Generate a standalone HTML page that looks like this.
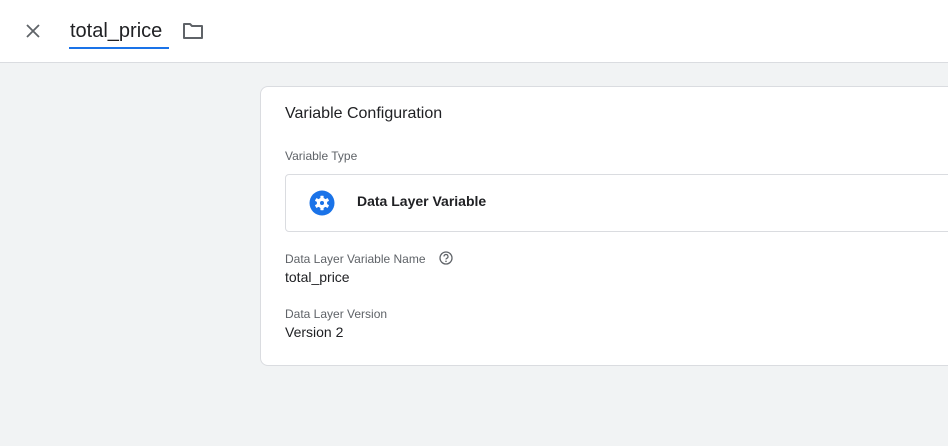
<!DOCTYPE html>
<html><head><style>
body{margin:0;width:948px;height:446px;background:#f1f3f4;font-family:"Liberation Sans",sans-serif;position:relative;overflow:hidden;color:#202124}
.hdr{position:absolute;left:0;top:0;width:948px;height:62px;background:#fff;border-bottom:1px solid #dadce0}
.t{position:absolute;left:70px;top:20px;font-size:20px;color:#202124}
.ul{position:absolute;left:69px;top:47px;width:100px;height:2px;background:#1a73e8}
.card{position:absolute;left:260px;top:86px;width:720px;height:278px;background:#fff;border:1px solid #dadce0;border-radius:8px}
.a{position:absolute;font-size:12px;color:#5f6368}
.v{position:absolute;font-size:14px;color:#202124}
.box{position:absolute;left:24px;top:87px;width:700px;height:56px;border:1px solid #dadce0;border-radius:4px}
</style></head><body>
<div class="hdr">
<svg style="position:absolute;left:25px;top:23px" width="16" height="16" viewBox="0 0 16 16"><path d="M2 2L14 14M14 2L2 14" stroke="#5f6368" stroke-width="1.8"/></svg>
<div class="t">total_price</div><div class="ul"></div>
<svg style="position:absolute;left:182px;top:21px" width="22" height="20" viewBox="0 0 22 20"><path d="M2 3h6l2 2h10v12H2z" fill="none" stroke="#5f6368" stroke-width="2" stroke-linejoin="round"/></svg>
</div>
<div class="card">
<div class="v" style="left:24px;top:18px;font-size:16px">Variable Configuration</div>
<div class="a" style="left:24px;top:62px">Variable Type</div>
<div class="box">
<svg style="position:absolute;left:23px;top:15px" width="26" height="26" viewBox="0 0 26 26"><circle cx="13" cy="13" r="12.5" fill="#1a73e8"/>
<g transform="translate(13 13)" fill="#fff">
<circle r="5.2"/>
<rect x="-1.6" y="-7.3" width="3.2" height="3.2" rx=".5"/>
<rect x="-1.6" y="-7.3" width="3.2" height="3.2" rx=".5" transform="rotate(60)"/>
<rect x="-1.6" y="-7.3" width="3.2" height="3.2" rx=".5" transform="rotate(120)"/>
<rect x="-1.6" y="-7.3" width="3.2" height="3.2" rx=".5" transform="rotate(180)"/>
<rect x="-1.6" y="-7.3" width="3.2" height="3.2" rx=".5" transform="rotate(240)"/>
<rect x="-1.6" y="-7.3" width="3.2" height="3.2" rx=".5" transform="rotate(300)"/>
<circle r="2" fill="#1a73e8"/>
</g></svg>
<div class="v" style="left:71px;top:18px;font-weight:bold">Data Layer Variable</div>
</div>
<div class="a" style="left:24px;top:165px">Data Layer Variable Name</div>
<svg style="position:absolute;left:178px;top:164px" width="14" height="14" viewBox="0 0 14 14"><circle cx="7" cy="7" r="6" fill="none" stroke="#5f6368" stroke-width="1.3"/><path d="M5 5.5a2 2 0 1 1 2.6 1.9c-.5.2-.6.5-.6 1.1" fill="none" stroke="#5f6368" stroke-width="1.2"/><circle cx="7" cy="10.3" r=".8" fill="#5f6368"/></svg>
<div class="v" style="left:24px;top:182px">total_price</div>
<div class="a" style="left:24px;top:220px">Data Layer Version</div>
<div class="v" style="left:24px;top:237px">Version 2</div>
</div>
</body></html>
